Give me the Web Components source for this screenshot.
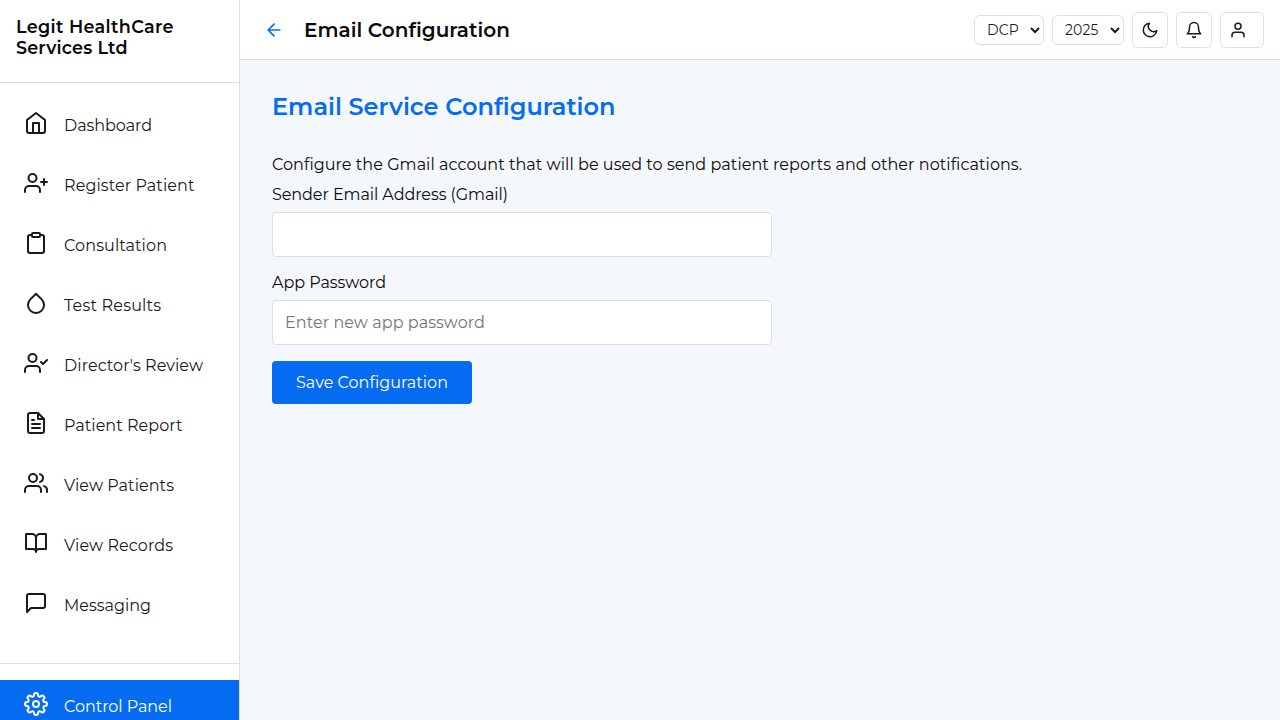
<!DOCTYPE html>
<html lang="en">
<head>
<meta charset="utf-8">
<title>Email Configuration</title>
<style>
body{margin:0;font-family:Montserrat,Inter,"Open Sans",sans-serif;font-size:16px;line-height:19px;color:#0a0a0a;background:#f4f7fc;overflow:hidden}
</style>
</head>
<body>
<health-app></health-app>
<script>
const ICONS={
home:'<path d="M3 9l9-7 9 7v11a2 2 0 0 1-2 2H5a2 2 0 0 1-2-2z"/><path d="M9 22V12h6v10"/>',
add:'<path d="M16 21v-2a4 4 0 0 0-4-4H5a4 4 0 0 0-4 4v2"/><circle cx="8.5" cy="7" r="4"/><path d="M20 8v6M23 11h-6"/>',
clip:'<path d="M16 4h2a2 2 0 0 1 2 2v14a2 2 0 0 1-2 2H6a2 2 0 0 1-2-2V6a2 2 0 0 1 2-2h2"/><rect x="8" y="2" width="8" height="4" rx="1"/>',
drop:'<path d="M12 2.69l5.66 5.66a8 8 0 1 1-11.31 0z"/>',
check:'<path d="M16 21v-2a4 4 0 0 0-4-4H5a4 4 0 0 0-4 4v2"/><circle cx="8.5" cy="7" r="4"/><path d="M17 11l2 2 4-4"/>',
file:'<path d="M14 2H6a2 2 0 0 0-2 2v16a2 2 0 0 0 2 2h12a2 2 0 0 0 2-2V8z"/><path d="M14 2v6h6M16 13H8M16 17H8M10 9H8"/>',
users:'<path d="M17 21v-2a4 4 0 0 0-4-4H5a4 4 0 0 0-4 4v2"/><circle cx="9" cy="7" r="4"/><path d="M23 21v-2a4 4 0 0 0-3-3.87M16 3.13a4 4 0 0 1 0 7.75"/>',
book:'<path d="M2 3h6a4 4 0 0 1 4 4v14a3 3 0 0 0-3-3H2zM22 3h-6a4 4 0 0 0-4 4v14a3 3 0 0 1 3-3h7z"/>',
msg:'<path d="M21 15a2 2 0 0 1-2 2H7l-4 4V5a2 2 0 0 1 2-2h14a2 2 0 0 1 2 2z"/>',
gear:'<circle cx="12" cy="12" r="3"/><path d="M19.4 15a1.65 1.65 0 0 0 .33 1.82l.06.06a2 2 0 0 1-2.83 2.83l-.06-.06a1.65 1.65 0 0 0-1.82-.33 1.65 1.65 0 0 0-1 1.51V21a2 2 0 0 1-4 0v-.09A1.65 1.65 0 0 0 9 19.4a1.65 1.65 0 0 0-1.82.33l-.06.06a2 2 0 0 1-2.83-2.83l.06-.06a1.65 1.65 0 0 0 .33-1.82 1.65 1.65 0 0 0-1.51-1H3a2 2 0 0 1 0-4h.09A1.65 1.65 0 0 0 4.6 9a1.65 1.65 0 0 0-.33-1.82l-.06-.06a2 2 0 0 1 2.83-2.83l.06.06a1.65 1.65 0 0 0 1.82.33H9a1.65 1.65 0 0 0 1-1.51V3a2 2 0 0 1 4 0v.09a1.65 1.65 0 0 0 1 1.51 1.65 1.65 0 0 0 1.82-.33l.06-.06a2 2 0 0 1 2.83 2.83l-.06.06a1.65 1.65 0 0 0-.33 1.82V9a1.65 1.65 0 0 0 1.51 1H21a2 2 0 0 1 0 4h-.09a1.65 1.65 0 0 0-1.51 1z"/>',
back:'<path d="M19 12H5M12 19l-7-7 7-7"/>',
moon:'<path d="M21 12.79A9 9 0 1 1 11.21 3 7 7 0 0 0 21 12.79z"/>',
bell:'<path d="M18 8A6 6 0 0 0 6 8c0 7-3 9-3 9h18s-3-2-3-9M13.73 21a2 2 0 0 1-3.46 0"/>',
user:'<path d="M20 21v-2a4 4 0 0 0-4-4H8a4 4 0 0 0-4 4v2"/><circle cx="12" cy="7" r="4"/>'
};
const define=(name,render,ready)=>customElements.define(name,class extends HTMLElement{
  connectedCallback(){
    if(!this.shadowRoot)this.attachShadow({mode:'open'}).innerHTML=render(this);
    if(ready)ready(this);
  }
});

define('line-icon',el=>{const s=el.getAttribute('size')||24;return `<style>:host{display:block;flex:none;width:${s}px;height:${s}px}svg{display:block}</style>
<svg width="${s}" height="${s}" viewBox="0 0 24 24" fill="none" stroke="currentColor" stroke-width="2" stroke-linecap="round" stroke-linejoin="round">${ICONS[el.getAttribute('name')]}</svg>`});

/* Adjusts its tracking so that the text fills the given advance width. */
define('set-text',el=>`<style>:host{display:block;white-space:nowrap}span{display:inline-block;vertical-align:top}</style><span>${el.getAttribute('text')}</span>`,
el=>{
  const s=el.shadowRoot.querySelector('span'),w=+el.getAttribute('w'),n=el.getAttribute('text').length;
  s.style.letterSpacing=((w-s.getBoundingClientRect().width)/(n-1))+'px';
  el.style.width=w+'px';
});

define('nav-item',el=>`<style>:host{display:flex;box-sizing:border-box;height:60px;padding:14px 24px 0;gap:16px;color:#1a1a1a}
:host([active]){background:#056cf2;color:#fff;padding-top:12px}
set-text{margin-top:5px}</style>
<line-icon name="${el.getAttribute('icon')}"></line-icon><set-text text="${el.getAttribute('label')}" w="${el.getAttribute('w')}"></set-text>`);

define('side-bar',()=>`<style>:host{display:flex;flex-direction:column;box-sizing:border-box;width:240px;flex:none;background:#fff;border-right:1px solid #dedede;overflow:hidden}
.brand{box-sizing:border-box;height:83px;flex:none;padding:16px;border-bottom:1px solid #dedede;font-size:17.6px;font-weight:600;line-height:21px}
nav{box-sizing:border-box;height:580px;flex:none;padding-top:14px}
.foot{flex:none;border-top:1px solid #dedede;padding-top:16px}</style>
<div class="brand"><set-text text="Legit HealthCare" w="157.5"></set-text><set-text text="Services Ltd" w="111.5"></set-text></div>
<nav>${[['home','Dashboard',88],['add','Register Patient',130.5],['clip','Consultation',103],['drop','Test Results',97],['check',"Director's Review",139],['file','Patient Report',118.5],['users','View Patients',110],['book','View Records',109],['msg','Messaging',87]].map(([i,l,w])=>`<nav-item icon="${i}" label="${l}" w="${w}"></nav-item>`).join('')}</nav>
<div class="foot"><nav-item active icon="gear" label="Control Panel" w="108"></nav-item></div>`);

define('pick-box',el=>`<style>:host{display:block}select{display:block;box-sizing:border-box;width:100%;height:30px;margin:0;padding:0 0 0 8px;border:1px solid #dedede;border-radius:6px;background:#fff;color:#1a1a1a;font:14px Montserrat,Inter,sans-serif;letter-spacing:.15px}</style>
<select><option>${el.getAttribute('value')}</option></select>`);

define('tool-button',el=>`<style>:host{display:flex;align-items:center;box-sizing:border-box;width:36px;height:36px;padding-left:8px;border:1px solid #dedede;border-radius:6px;background:#fff;color:#1a1a1a}:host([wide]){width:44px}</style>
<line-icon name="${el.getAttribute('icon')}" size="18"></line-icon>`);

define('top-bar',()=>`<style>:host{display:flex;align-items:center;box-sizing:border-box;height:60px;padding:0 16px 0 24px;background:#fff;border-bottom:1px solid #dedede}
.back{color:#056cf2;margin-right:20px}.title{flex:1;padding-top:1px;font-size:20px;font-weight:600;line-height:24px}.tools{display:flex;align-items:center;gap:8px}</style>
<line-icon class="back" name="back" size="20"></line-icon><div class="title"><set-text text="Email Configuration" w="206"></set-text></div>
<div class="tools"><pick-box style="width:70px" value="DCP"></pick-box><pick-box style="width:72px" value="2025"></pick-box>
<tool-button icon="moon"></tool-button><tool-button icon="bell"></tool-button><tool-button wide icon="user"></tool-button></div>`);

define('form-field',el=>`<style>:host{display:block;width:500px;margin-bottom:16px}label{display:block;margin-bottom:8px}
input{display:block;width:100%;box-sizing:border-box;height:45px;margin:0;padding:0 12px;border:1px solid #dedede;border-radius:4px;background:#fff;font:inherit;letter-spacing:.07px}input::placeholder{color:#757575}</style>
<label for="f"><set-text text="${el.getAttribute('label')}" w="${el.getAttribute('w')}"></set-text></label>
<input id="f" placeholder="${el.getAttribute('hint')||''}">`);

define('save-button',()=>`<style>:host{display:flex;align-items:center;justify-content:center;width:200px;height:43px;border-radius:4px;background:#056cf2;color:#fff}</style><set-text text="Save Configuration" w="152"></set-text>`);

define('config-form',()=>`<style>:host{display:block;padding:32px}
h2{margin:0 0 34px;font-size:24px;font-weight:600;line-height:29px;color:#056cf2}
p{margin:0 0 11px}</style>
<h2><set-text text="Email Service Configuration" w="343.5"></set-text></h2>
<p><set-text text="Configure the Gmail account that will be used to send patient reports and other notifications." w="750"></set-text></p>
<form-field label="Sender Email Address (Gmail)" w="236"></form-field>
<form-field label="App Password" w="114" hint="Enter new app password"></form-field>
<save-button></save-button>`);

define('health-app',()=>`<style>:host{display:flex;width:1280px;height:720px;overflow:hidden}main{flex:1;min-width:0}</style><side-bar></side-bar><main><top-bar></top-bar><config-form></config-form></main>`);
</script>
</body>
</html>
